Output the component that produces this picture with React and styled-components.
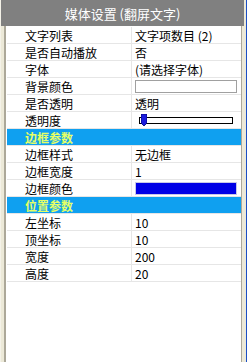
import React from "react";
import styled, { createGlobalStyle } from "styled-components";

const Global = createGlobalStyle`
  body {
    margin: 0;
    font-family: "Noto Sans CJK SC", "DejaVu Sans", sans-serif;
  }
`;

const Window = styled.div`
  width: 247px;
  height: 362px;
  box-sizing: border-box;
  background: #ece9d8;
  border-left: 1px solid #f4f2e8;
  border-right: 1px solid #1c4fc4;
  display: flex;
  flex-direction: column;
`;

const Title = styled.div`
  height: 26px;
  background: #808080;
  color: #ffffff;
  font-size: 13px;
  display: flex;
  align-items: center;
  justify-content: center;
  margin-right: 2px;
`;

const Body = styled.div`
  flex: 1;
  margin: 0 4px 0 3px;
  background: #ffffff;
  border-left: 2px solid #aca899;
  border-right: 1px solid #aca899;
  padding: 1px 0 0 1px;
`;

const Row = styled.div`
  display: flex;
  height: 17px;
  box-sizing: border-box;
  border-bottom: 1px solid #e6e6e6;
  font-size: 12px;
  color: #000;
  background: ${(p) => (p.$section ? "#0fa0f0" : "#fff")};
`;

const Label = styled.div`
  width: 125px;
  box-sizing: border-box;
  padding-left: 18px;
  border-right: 1px solid #e6e6e6;
  display: flex;
  align-items: center;
  white-space: nowrap;
`;

const Value = styled.div`
  flex: 1;
  padding-left: 3px;
  display: flex;
  align-items: center;
  white-space: nowrap;
`;

const SectionTitle = styled.div`
  padding-left: 18px;
  display: flex;
  align-items: center;
  font-weight: bold;
  color: #e6ff66;
  font-size: 12px;
`;

const Swatch = styled.div`
  width: 100px;
  height: 11px;
  border: 1px solid ${(p) => (p.$fill ? "#c8c8e8" : "#a0a0a0")};
  background: ${(p) => p.$fill || "#ffffff"};
`;

const Slider = styled.div`
  position: relative;
  width: 92px;
  height: 5px;
  margin-left: 4px;
  border: 1px solid #000;
  background: #fff;
`;

const Thumb = styled.svg`
  position: absolute;
  left: 1px;
  top: -4px;
`;

const rows1 = [
  ["文字列表", "文字项数目 (2)"],
  ["是否自动播放", "否"],
  ["字体", "(请选择字体)"],
];

const rows3 = [
  ["边框样式", "无边框"],
  ["边框宽度", "1"],
];

const rows4 = [
  ["左坐标", "10"],
  ["顶坐标", "10"],
  ["宽度", "200"],
  ["高度", "20"],
];

const Prop = ({ label, children }) => (
  <Row>
    <Label>{label}</Label>
    <Value>{children}</Value>
  </Row>
);

export default function App() {
  return (
    <>
      <Global />
      <Window>
        <Title>媒体设置 (翻屏文字)</Title>
        <Body>
          {rows1.map(([l, v]) => (
            <Prop key={l} label={l}>{v}</Prop>
          ))}
          <Prop label="背景颜色">
            <Swatch />
          </Prop>
          <Prop label="是否透明">透明</Prop>
          <Prop label="透明度">
            <Slider>
              <Thumb width="6" height="12" viewBox="0 0 6 12">
                <path d="M0 0H6V9L3 12L0 9Z" fill="#1a1adc" stroke="#000070" strokeWidth="0.8" />
              </Thumb>
            </Slider>
          </Prop>
          <Row $section>
            <SectionTitle>边框参数</SectionTitle>
          </Row>
          {rows3.map(([l, v]) => (
            <Prop key={l} label={l}>{v}</Prop>
          ))}
          <Prop label="边框颜色">
            <Swatch $fill="#0000e6" />
          </Prop>
          <Row $section>
            <SectionTitle>位置参数</SectionTitle>
          </Row>
          {rows4.map(([l, v]) => (
            <Prop key={l} label={l}>{v}</Prop>
          ))}
        </Body>
      </Window>
    </>
  );
}
